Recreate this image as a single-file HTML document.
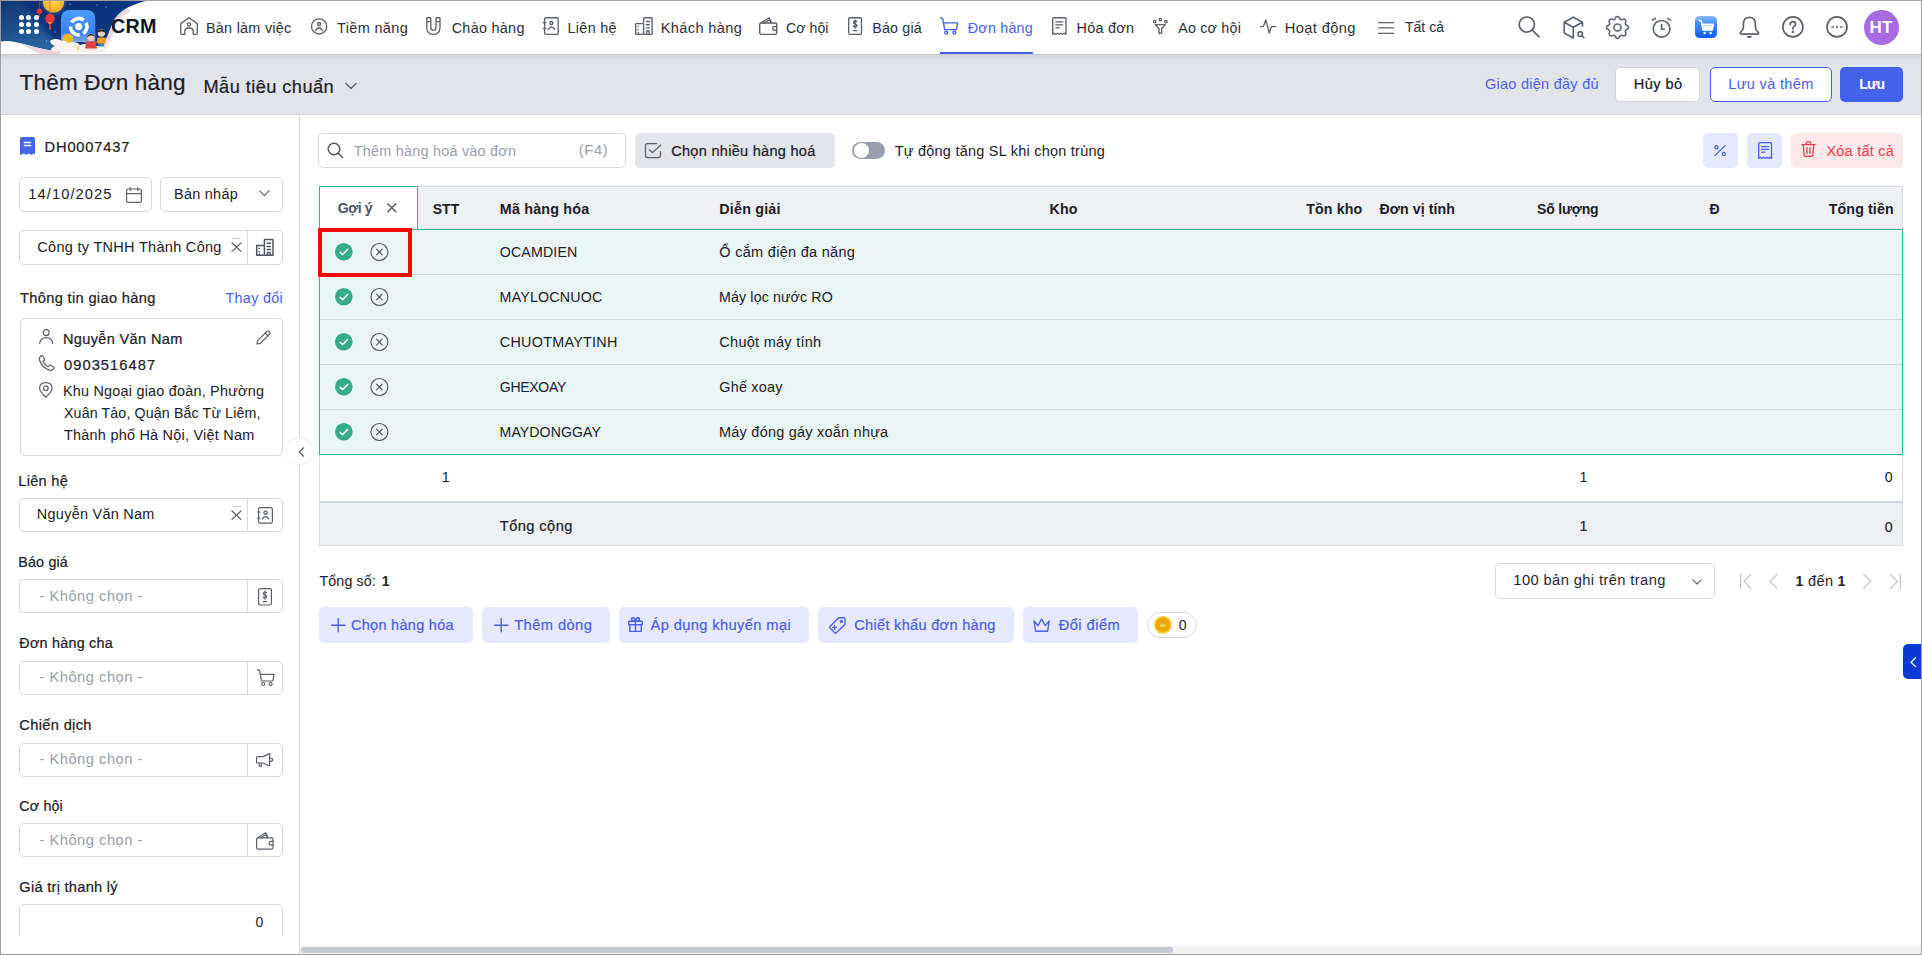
<!DOCTYPE html>
<html><head><meta charset="utf-8"><style>
html,body{margin:0;padding:0;}
body{width:1922px;height:955px;position:relative;overflow:hidden;background:#fff;font-family:"Liberation Sans", sans-serif;}
.t{position:absolute;white-space:nowrap;line-height:1;}
svg{overflow:visible}
</style></head><body>
<div style="position:absolute;left:0px;top:0px;width:1922px;height:54px;background:#fff;"></div><div style="position:absolute;left:0px;top:54px;width:1922px;height:61px;background:#e3e4e9;"></div><div style="position:absolute;left:0px;top:54px;width:1922px;height:7px;background:linear-gradient(#c5c6cc,#d5d6db 25%,#e3e4e9);"></div><div style="position:absolute;left:0px;top:114px;width:1922px;height:1px;background:#cfd3da;"></div><div style="position:absolute;left:0px;top:115px;width:299px;height:840px;background:#fff;"></div><div style="position:absolute;left:300px;top:115px;width:1622px;height:840px;background:#fff;"></div><div style="position:absolute;left:300px;top:946px;width:1621px;height:8px;background:#f1f1f1;"></div><div style="position:absolute;left:301px;top:947px;width:872px;height:6px;background:#c4c8d2;border-radius:3px;"></div><svg style="position:absolute;left:0px;top:0px;overflow:hidden" width="165" height="54" viewBox="0 0 165 54" fill="none">
<defs>
 <linearGradient id="nv" x1="0" y1="0" x2="1" y2="0.3"><stop offset="0" stop-color="#0c2f6e"/><stop offset="0.6" stop-color="#073078"/><stop offset="1" stop-color="#0d3f8c"/></linearGradient>
 <linearGradient id="nv2" x1="0" y1="0" x2="0.4" y2="1"><stop offset="0" stop-color="#123a72" stop-opacity="0.7"/><stop offset="1" stop-color="#2a66a2"/></linearGradient>
 <linearGradient id="lg" x1="0" y1="0" x2="0" y2="1"><stop offset="0" stop-color="#4b9cff"/><stop offset="0.7" stop-color="#3a80f5"/><stop offset="1" stop-color="#7fa9f0"/></linearGradient>
 <radialGradient id="mn" cx="0.5" cy="0.4" r="0.6"><stop offset="0" stop-color="#ffd95a"/><stop offset="1" stop-color="#f6ab1a"/></radialGradient>
 <filter id="bl" x="-0.5" y="-0.5" width="2" height="2"><feGaussianBlur stdDeviation="3"/></filter>
 <radialGradient id="glow"><stop offset="0.6" stop-color="#ffffff" stop-opacity="0.25"/><stop offset="1" stop-color="#ffffff" stop-opacity="0"/></radialGradient>
</defs>
<path d="M128 8 C120 13 115 17 113 22 C109 31 107 38 104 44 C101 49 96 52 90 53" stroke="#efd8e0" stroke-width="8" fill="none"/>
<path d="M0 0 H152 C132 3 118 11 113 22 C109 31 107 38 104 44 C100 50 92 53 80 53 H0 Z" fill="url(#nv)"/>
<path d="M-4 0 H20 C30 8 40 24 50 36 C56 44 58 50 60 53 H-4 Z" fill="url(#nv2)" filter="url(#bl)"/>
<circle cx="53.6" cy="2" r="14" fill="url(#glow)"/>
<circle cx="53.6" cy="2" r="10.6" fill="url(#mn)"/>
<path d="M0 41.5 C8 40 16 42 24 44 C34 47 44 50 56 51 L58 54 H0 Z" fill="#ffffff"/>
<path d="M20 43.5 C32 46 44 50 58 51 L62 54 H40 C32 50 26 46 20 43.5Z" fill="#ead5dd"/>
<line x1="39.4" y1="0" x2="39.4" y2="9" stroke="#d03a2a" stroke-width="0.7"/>
<ellipse cx="39.4" cy="11.2" rx="2.7" ry="2.6" fill="#df3a33"/>
<rect x="38.9" y="13.5" width="1.1" height="3.5" fill="#d8402c"/>
<line x1="49.9" y1="0" x2="49.9" y2="13" stroke="#e06a2a" stroke-width="0.8"/>
<ellipse cx="49.9" cy="18.6" rx="4.9" ry="5.2" fill="#e2383a"/>
<rect x="48.9" y="23" width="2.1" height="6.8" fill="#d33a33"/>
<rect x="48.3" y="22.3" width="3.3" height="1.4" fill="#f2a73a"/>
<circle cx="70" cy="4" r="0.6" fill="#cfe0ff"/><circle cx="97" cy="5" r="0.6" fill="#cfe0ff"/><circle cx="106" cy="7" r="0.6" fill="#cfe0ff"/><circle cx="127" cy="11" r="0.6" fill="#cfe0ff"/><circle cx="55" cy="32" r="0.6" fill="#cfe0ff"/><circle cx="46.6" cy="41" r="0.6" fill="#cfe0ff"/>
<path d="M61 19 Q61 9.9 70 9.9 H86.3 Q95.3 9.9 95.3 19 V42 H61 Z" fill="url(#lg)"/>
<circle cx="78.7" cy="26.6" r="8.2" fill="none" stroke="#fff" stroke-width="3.6" stroke-dasharray="14 3.5 12 3.5 14 4.5" transform="rotate(-150 78.7 26.6)"/>
<circle cx="78.7" cy="26.6" r="3.6" fill="#fff"/>
<ellipse cx="67.8" cy="38.8" rx="5.4" ry="5" fill="#f1b91e"/>
<path d="M50 41 C54 38 60 39 62 41 C64 40 67 41 68 43 C72 41 78 42 80 45 C84 43 90 44 92 46 L104 46 C106 48 104 52 98 52 C86 53 62 53 52 51 C50 49 52 47 55 46 C52 45 50 43 50 41Z" fill="#f6f1ec"/>
<path d="M104 40 C107 38 110 40 110 43 C110 46 106 48 102 47Z" fill="#f3ece6"/>
<rect x="60" y="52" width="50" height="3" fill="#fdfbf9"/>

<circle cx="90.8" cy="37.4" r="3.6" fill="#f4cdb0"/>
<path d="M87 37.5 C86.6 33 95 32.6 94.6 37 C93 35 89 35 87 37.5Z" fill="#2b1a14"/>
<path d="M86.5 41.5 L95.5 41.2 L97 48.5 L85 48.5Z" fill="#e04646"/>
<path d="M84 42 L87 43 M95 43 L98 41" stroke="#e04646" stroke-width="1.3"/>
<circle cx="101.3" cy="33" r="3.7" fill="#f4cdb0"/>
<path d="M97.4 33 C97 28.4 105.6 28.4 105.3 33 C104 31 99 31 97.4 33Z" fill="#2b1a14"/>
<rect x="97.2" y="37.4" width="8.6" height="6.4" rx="1.6" fill="#f59f1c"/>
<rect x="98.2" y="43.6" width="6" height="2.8" fill="#2f86b4"/>
<path d="M105.5 38.5 L109.6 36.8" stroke="#f4cdb0" stroke-width="1"/>
<rect x="77" y="46.6" width="2.2" height="2.8" fill="#f2d36a"/>
</svg><div style="position:absolute;left:18.9px;top:14.7px;width:5px;height:5px;border-radius:50%;background:#fff;"></div><div style="position:absolute;left:26.4px;top:14.7px;width:5px;height:5px;border-radius:50%;background:#fff;"></div><div style="position:absolute;left:33.9px;top:14.7px;width:5px;height:5px;border-radius:50%;background:#fff;"></div><div style="position:absolute;left:18.9px;top:21.9px;width:5px;height:5px;border-radius:50%;background:#fff;"></div><div style="position:absolute;left:26.4px;top:21.9px;width:5px;height:5px;border-radius:50%;background:#fff;"></div><div style="position:absolute;left:33.9px;top:21.9px;width:5px;height:5px;border-radius:50%;background:#fff;"></div><div style="position:absolute;left:18.9px;top:29.2px;width:5px;height:5px;border-radius:50%;background:#fff;"></div><div style="position:absolute;left:26.4px;top:29.2px;width:5px;height:5px;border-radius:50%;background:#fff;"></div><div style="position:absolute;left:33.9px;top:29.2px;width:5px;height:5px;border-radius:50%;background:#fff;"></div><svg style="position:absolute;left:180px;top:17px;" width="18" height="18" viewBox="0 0 18 18" fill="none"><path d="M9 0.8 L17.3 6.6 V16.3 Q17.3 17.3 16.3 17.3 H13.2 V14.2 Q13.2 11 9 11 Q4.8 11 4.8 14.2 V17.3 H1.7 Q0.7 17.3 0.7 16.3 V6.6 Z" stroke="#5c616c" stroke-width="1.35" stroke-linecap="round" stroke-linejoin="round"/><circle cx="9" cy="7.4" r="1.6" stroke="#5c616c" stroke-width="1.35" stroke-linecap="round" stroke-linejoin="round"/></svg><svg style="position:absolute;left:311px;top:18px;" width="17" height="17" viewBox="0 0 17 17" fill="none"><circle cx="8.1" cy="8.4" r="7.6" stroke="#5c616c" stroke-width="1.35" stroke-linecap="round" stroke-linejoin="round"/><circle cx="8.1" cy="6" r="1.5" stroke="#5c616c" stroke-width="1.35" stroke-linecap="round" stroke-linejoin="round"/><path d="M4.6 12.6 Q8.1 6.8 11.6 12.6" stroke="#5c616c" stroke-width="1.35" stroke-linecap="round" stroke-linejoin="round"/></svg><svg style="position:absolute;left:426px;top:17px;" width="15" height="18" viewBox="0 0 15 18" fill="none"><path d="M0.8 1.5 Q0.8 0.7 1.6 0.7 H4 Q4.8 0.7 4.8 1.5 V10.5 Q4.8 13.3 7.4 13.3 Q10 13.3 10 10.5 V1.5 Q10 0.7 10.8 0.7 H13.2 Q14 0.7 14 1.5 V10.5 Q14 17.3 7.4 17.3 Q0.8 17.3 0.8 10.5 Z M0.8 4.6 H4.8 M10 4.6 H14" stroke="#5c616c" stroke-width="1.35" stroke-linecap="round" stroke-linejoin="round"/></svg><svg style="position:absolute;left:543px;top:17px;" width="16" height="18" viewBox="0 0 16 18" fill="none"><rect x="1.6" y="0.7" width="13.6" height="16.6" rx="1.2" stroke="#5c616c" stroke-width="1.35" stroke-linecap="round" stroke-linejoin="round"/><path d="M0.5 5.5 H2.6 M0.5 11.5 H2.6" stroke="#5c616c" stroke-width="1.35" stroke-linecap="round" stroke-linejoin="round"/><circle cx="8.4" cy="6" r="1.5" stroke="#5c616c" stroke-width="1.35" stroke-linecap="round" stroke-linejoin="round"/><path d="M5 12.3 Q8.4 7.6 11.8 12.3" stroke="#5c616c" stroke-width="1.35" stroke-linecap="round" stroke-linejoin="round"/></svg><svg style="position:absolute;left:635px;top:17px;" width="18" height="18" viewBox="0 0 18 18" fill="none"><path d="M0.7 17.3 V6.6 H8.6 M8.6 17.3 V1.4 Q8.6 0.7 9.3 0.7 H16.4 Q17.1 0.7 17.1 1.4 V17.3 Z M0.7 17.3 H17.1 M3.2 9.5 V9.8 M3.2 12.6 V12.9 M11.4 4.5 H14.4 M11.4 7.7 H14.4 M11.4 10.9 H14.4 M11.6 17.3 V14 H14.2 V17.3 M3.4 17.3 V15.4" stroke="#5c616c" stroke-width="1.35" stroke-linecap="round" stroke-linejoin="round"/></svg><svg style="position:absolute;left:759px;top:17px;" width="19" height="18" viewBox="0 0 19 18" fill="none"><path d="M1.5 6.3 L10 0.8 L12.3 5 M5 6.3 L10.5 2.8 L12 5.6" stroke="#5c616c" stroke-width="1.35" stroke-linecap="round" stroke-linejoin="round"/><rect x="0.7" y="6" width="17" height="11.3" rx="1.5" stroke="#5c616c" stroke-width="1.35" stroke-linecap="round" stroke-linejoin="round"/><path d="M17.7 9.6 H15.4 Q13.6 9.6 13.6 11.4 Q13.6 13.2 15.4 13.2 H17.7" stroke="#5c616c" stroke-width="1.35" stroke-linecap="round" stroke-linejoin="round"/></svg><svg style="position:absolute;left:848px;top:17px;" width="14" height="18" viewBox="0 0 14 18" fill="none"><rect x="0.7" y="0.7" width="12.8" height="16.6" rx="1.3" stroke="#5c616c" stroke-width="1.35" stroke-linecap="round" stroke-linejoin="round"/><path d="M8.8 4.9 Q8.5 4 7.1 4 Q5.4 4 5.4 5.4 Q5.4 6.6 7.1 7 Q8.9 7.4 8.9 8.7 Q8.9 10 7.1 10 Q5.6 10 5.3 9 M7.1 2.8 V11.2 M5.4 13.6 H8.8" stroke="#5c616c" stroke-width="1.35" stroke-linecap="round" stroke-linejoin="round"/></svg><svg style="position:absolute;left:940px;top:17px;" width="19" height="18" viewBox="0 0 19 18" fill="none"><path d="M0.7 0.7 L2.8 1.8 L4.7 12.6 H16.4 L17.6 5.8 H3.6" stroke="#4262ee" stroke-width="1.35" stroke-linecap="round" stroke-linejoin="round"/><circle cx="6.2" cy="15.6" r="1.5" stroke="#4262ee" stroke-width="1.35" stroke-linecap="round" stroke-linejoin="round"/><circle cx="14.4" cy="15.6" r="1.5" stroke="#4262ee" stroke-width="1.35" stroke-linecap="round" stroke-linejoin="round"/></svg><div style="position:absolute;left:940px;top:52px;width:93px;height:2px;background:#4262ee;"></div><svg style="position:absolute;left:1052px;top:17px;" width="15" height="18" viewBox="0 0 15 18" fill="none"><path d="M0.7 17.3 V1.6 Q0.7 0.7 1.6 0.7 H13.1 Q14 0.7 14 1.6 V17.3 L12.3 16.2 L10.6 17.3 L8.9 16.2 L7.2 17.3 L5.5 16.2 L3.8 17.3 L2.2 16.2 Z M3.8 4.8 H10.8 M3.8 7.8 H10.8 M3.8 10.8 H7.6" stroke="#5c616c" stroke-width="1.35" stroke-linecap="round" stroke-linejoin="round"/></svg><svg style="position:absolute;left:1153px;top:18px;" width="15" height="16" viewBox="0 0 15 16" fill="none"><circle cx="7.3" cy="1.5" r="1.2" stroke="#5c616c" stroke-width="1.35" stroke-linecap="round" stroke-linejoin="round"/><circle cx="1.7" cy="3.6" r="1.2" stroke="#5c616c" stroke-width="1.35" stroke-linecap="round" stroke-linejoin="round"/><circle cx="12.9" cy="3.6" r="1.2" stroke="#5c616c" stroke-width="1.35" stroke-linecap="round" stroke-linejoin="round"/><path d="M2.3 6.6 H12.3 L8.6 10.8 V15 L6 15.6 V10.8 Z" stroke="#5c616c" stroke-width="1.35" stroke-linecap="round" stroke-linejoin="round"/></svg><svg style="position:absolute;left:1260px;top:19px;" width="17" height="15" viewBox="0 0 17 15" fill="none"><path d="M0.6 7.6 H3.4 L5.8 0.9 L9.3 14.2 L11.4 7.6 H15.8" stroke="#5c616c" stroke-width="1.35" stroke-linecap="round" stroke-linejoin="round"/></svg><svg style="position:absolute;left:1378px;top:21px;" width="17" height="14" viewBox="0 0 17 14" fill="none"><path d="M0.6 1.6 H15.8 M0.6 6.8 H15.8 M0.6 12.4 H15.8" stroke="#5c616c" stroke-width="1.2" stroke-linecap="round"/></svg><svg style="position:absolute;left:1518px;top:16px;" width="23" height="23" viewBox="0 0 23 23" fill="none"><circle cx="8.8" cy="8.6" r="7.6" stroke="#5d616b" stroke-width="1.7" stroke-linecap="round" stroke-linejoin="round"/><path d="M14.6 14.4 L21 20.8" stroke="#5d616b" stroke-width="1.7" stroke-linecap="round" stroke-linejoin="round"/></svg><svg style="position:absolute;left:1563px;top:16px;" width="23" height="23" viewBox="0 0 23 23" fill="none"><path d="M19.5 10 V6.2 L10.3 1.2 L1.2 6.2 V17 L10.3 22 M1.2 6.2 L10.3 11.2 L19.5 6.2 M10.3 11.2 V22" stroke="#58606f" stroke-width="1.6" stroke-linecap="round" stroke-linejoin="round"/><circle cx="17.2" cy="18" r="2.3" stroke="#58606f" stroke-width="1.6" stroke-linecap="round" stroke-linejoin="round"/><path d="M18.9 19.7 L20.9 21.7" stroke="#58606f" stroke-width="1.6" stroke-linecap="round" stroke-linejoin="round"/></svg><svg style="position:absolute;left:1606px;top:16px" width="23" height="23" viewBox="2.6 2.6 18.8 18.8" fill="none"><path d="M10.325 4.317c.426-1.756 2.924-1.756 3.35 0a1.724 1.724 0 0 0 2.573 1.066c1.543-.94 3.31.826 2.37 2.370a1.724 1.724 0 0 0 1.065 2.572c1.756.426 1.756 2.924 0 3.350a1.724 1.724 0 0 0-1.066 2.573c.94 1.543-.826 3.310-2.370 2.370a1.724 1.724 0 0 0-2.572 1.065c-.426 1.756-2.924 1.756-3.350 0a1.724 1.724 0 0 0-2.573-1.066c-1.543.94-3.310-.826-2.370-2.370a1.724 1.724 0 0 0-1.065-2.572c-1.756-.426-1.756-2.924 0-3.350a1.724 1.724 0 0 0 1.066-2.573c-.94-1.543.826-3.310 2.370-2.370c1 .608 2.296.07 2.572-1.065z" stroke="#58606f" stroke-width="1.3" stroke-linejoin="round"/><circle cx="12" cy="12" r="2.9" stroke="#58606f" stroke-width="1.3"/></svg><svg style="position:absolute;left:1651px;top:16px;" width="22" height="23" viewBox="0 0 22 23" fill="none"><circle cx="10.6" cy="12.8" r="8.3" stroke="#58606f" stroke-width="1.6" stroke-linecap="round" stroke-linejoin="round"/><path d="M10.6 8.6 V13.2 H13.4 M1.6 4.2 L4.4 2.4 M19.6 4.2 L16.8 2.4" stroke="#58606f" stroke-width="1.6" stroke-linecap="round" stroke-linejoin="round"/></svg><svg style="position:absolute;left:1695px;top:16px;" width="22" height="22" viewBox="0 0 22 22" fill="none"><defs><linearGradient id="cg" x1="0" y1="0" x2="0" y2="1"><stop offset="0" stop-color="#8cbcff"/><stop offset="0.35" stop-color="#3f8cff"/><stop offset="1" stop-color="#0a5cff"/></linearGradient></defs>
<rect x="0" y="0" width="22" height="22" rx="4.5" fill="url(#cg)"/>
<path d="M4.5 4.3 L6.4 5.3 L8 13.8 H17.2 L18.2 8.3 H7" stroke="#fff" stroke-width="1.7" stroke-linecap="round" stroke-linejoin="round" fill="none"/>
<path d="M7.6 9.6 H17.8 L17.2 13.6 H8.3Z" fill="#fff"/><circle cx="9.6" cy="17" r="1.2" fill="#fff"/><circle cx="15.6" cy="17" r="1.2" fill="#fff"/></svg><svg style="position:absolute;left:1739px;top:16px;" width="21" height="23" viewBox="0 0 21 23" fill="none"><path d="M10.4 1.4 Q4.4 1.4 4.4 8.2 V11.6 Q4.4 14 1.4 16.4 Q0.6 18 2.8 18.2 H18 Q20 18 19.4 16.4 Q16.4 14 16.4 11.6 V8.2 Q16.4 1.4 10.4 1.4 Z M8.8 20.8 H12" stroke="#5d616b" stroke-width="1.7" stroke-linecap="round" stroke-linejoin="round"/></svg><svg style="position:absolute;left:1782px;top:16px;" width="22" height="22" viewBox="0 0 22 22" fill="none"><circle cx="10.9" cy="10.9" r="10" stroke="#5d616b" stroke-width="1.7" stroke-linecap="round" stroke-linejoin="round"/><path d="M8.2 8.4 Q8.2 5.6 10.9 5.6 Q13.6 5.6 13.6 8.2 Q13.6 9.8 11.8 10.6 Q10.9 11.2 10.9 12.8" stroke="#5d616b" stroke-width="1.7" stroke-linecap="round" stroke-linejoin="round"/><circle cx="10.9" cy="15.9" r="0.5" stroke="#5d616b" stroke-width="1.7" stroke-linecap="round" stroke-linejoin="round"/></svg><svg style="position:absolute;left:1826px;top:16px;" width="22" height="22" viewBox="0 0 22 22" fill="none"><circle cx="11" cy="10.9" r="10" stroke="#5d616b" stroke-width="1.7" stroke-linecap="round" stroke-linejoin="round"/><circle cx="6.6" cy="11" r="0.35" stroke="#5d616b" stroke-width="1.7" stroke-linecap="round" stroke-linejoin="round"/><circle cx="11" cy="11" r="0.35" stroke="#5d616b" stroke-width="1.7" stroke-linecap="round" stroke-linejoin="round"/><circle cx="15.4" cy="11" r="0.35" stroke="#5d616b" stroke-width="1.7" stroke-linecap="round" stroke-linejoin="round"/></svg><div style="position:absolute;left:1864px;top:10px;width:35px;height:35px;border-radius:50%;background:#a86be2;"></div><svg style="position:absolute;left:345px;top:82px;" width="12" height="8" viewBox="0 0 12 8" fill="none"><path d="M1 1.5 L6 6.5 L11 1.5" stroke="#5c616c" stroke-width="1.3" stroke-linecap="round" stroke-linejoin="round"/></svg><div style="position:absolute;left:1614.9px;top:67.3px;width:85.6px;height:34.3px;box-sizing:border-box;background:#fff;border:1px solid #d3d6dc;border-radius:5px;"></div><div style="position:absolute;left:1710px;top:67px;width:122px;height:35px;box-sizing:border-box;background:#fff;border:1px solid #4262ee;border-radius:5px;"></div><div style="position:absolute;left:1840px;top:67px;width:63px;height:35px;background:#4262ee;border-radius:5px;"></div><svg style="position:absolute;left:20px;top:137px;" width="15" height="18" viewBox="0 0 15 18" fill="none"><path d="M0 1.8 Q0 0 1.8 0 H13.2 Q15 0 15 1.8 V17.2 Q13.8 16 12.6 17.2 Q11.4 18.2 10 17 Q8.8 16 7.5 17.2 Q6.2 18.2 5 17 Q3.8 16 2.5 17.2 Q1.2 18.2 0 17.2 Z" fill="#4664ee"/><path d="M4.4 5.4 H10.6 M4.4 8.6 H10.6" stroke="#fff" stroke-width="1.5" stroke-linecap="round"/></svg><div style="position:absolute;left:19.2px;top:177.2px;width:132.5px;height:34.5px;box-sizing:border-box;background:#fff;border:1px solid #d6d9e0;border-radius:5px;"></div><svg style="position:absolute;left:126px;top:187px;" width="16" height="16" viewBox="0 0 16 16" fill="none"><rect x="0.6" y="2" width="14.8" height="13.4" rx="1.6" stroke="#5a5f6b" stroke-width="1.2" stroke-linecap="round" stroke-linejoin="round"/><path d="M0.6 6.6 H15.4 M4.2 0.6 V3.4 M11.8 0.6 V3.4" stroke="#5a5f6b" stroke-width="1.2" stroke-linecap="round" stroke-linejoin="round"/></svg><div style="position:absolute;left:160.2px;top:177.1px;width:122.5px;height:34.7px;box-sizing:border-box;background:#fff;border:1px solid #d6d9e0;border-radius:5px;"></div><svg style="position:absolute;left:259px;top:190px;" width="11" height="7" viewBox="0 0 11 7" fill="none"><path d="M0.8 0.8 L5.3 5.6 L9.9 0.8" stroke="#5a5f6b" stroke-width="1.2" stroke-linecap="round" stroke-linejoin="round"/></svg><div style="position:absolute;left:19.2px;top:230.3px;width:263.5px;height:34.3px;box-sizing:border-box;background:#fff;border:1px solid #d6d9e0;border-radius:5px;"></div><div style="position:absolute;left:247.2px;top:231px;width:1px;height:33px;background:#d6d9e0;"></div><svg style="position:absolute;left:231px;top:238px;" width="11" height="14" viewBox="0 0 11 14" fill="none"><path d="M1 0.5 H10 " stroke="#c9ccd3" stroke-width="1"/><path d="M1 5 L10 13.4 M10 5 L1 13.4" stroke="#5a5f6b" stroke-width="1.2" stroke-linecap="round"/></svg><svg style="position:absolute;left:256px;top:239px;" width="18" height="17" viewBox="0 0 18 17" fill="none"><path d="M0.7 16.3 V6.4 H8.4 M8.4 16.3 V1.2 Q8.4 0.6 9 0.6 H16.4 Q17 0.6 17 1.2 V16.3 Z M0.7 16.3 H17 M3.1 9.2 V9.6 M3.1 12.4 V12.8 M11.2 4.2 H14.4 M11.2 7.4 H14.4 M11.2 10.6 H14.4 M11.4 16.3 V13.6 H14.2 V16.3 M3.4 16.3 V15" stroke="#4f5563" stroke-width="1.5" stroke-linecap="round" stroke-linejoin="round"/></svg><div style="position:absolute;left:19.5px;top:318.2px;width:263.1px;height:137.8px;box-sizing:border-box;background:#fff;border:1px solid #d6d9e0;border-radius:5px;"></div><svg style="position:absolute;left:38.9px;top:329px;" width="15" height="15" viewBox="0 0 15 15" fill="none"><circle cx="7.2" cy="3.6" r="3" stroke="#5a5f6b" stroke-width="1.2" stroke-linecap="round" stroke-linejoin="round"/><path d="M0.6 14.4 Q1.6 8.6 7.2 8.6 Q12.8 8.6 13.8 14.4" stroke="#5a5f6b" stroke-width="1.2" stroke-linecap="round" stroke-linejoin="round"/></svg><svg style="position:absolute;left:255.5px;top:329.5px;" width="16" height="15" viewBox="0 0 16 15" fill="none"><path d="M1 14 L1.6 10.6 L10.6 1.6 Q11.8 0.4 13.2 1.8 Q14.6 3.2 13.4 4.4 L4.4 13.4 Z M9.2 3 L12 5.8" stroke="#5a5f6b" stroke-width="1.2" stroke-linecap="round" stroke-linejoin="round"/></svg><svg style="position:absolute;left:37.8px;top:355px;" width="17" height="16" viewBox="0 0 17 16" fill="none"><path d="M4.6 0.8 L6.6 4.4 Q7 5.2 6.2 5.8 L5 6.8 Q6.6 10.2 10 11.8 L11 10.6 Q11.6 9.8 12.4 10.2 L15.8 12 Q16.4 12.6 15.8 13.6 Q14 16 11.4 15.2 Q4 12.6 1.4 5 Q0.8 2.6 3 1 Q4 0.2 4.6 0.8 Z" stroke="#5a5f6b" stroke-width="1.2" stroke-linecap="round" stroke-linejoin="round"/></svg><svg style="position:absolute;left:39.3px;top:382px;" width="14" height="16" viewBox="0 0 14 16" fill="none"><path d="M6.8 15.2 Q0.6 9.4 0.6 6.2 Q0.6 0.6 6.8 0.6 Q13 0.6 13 6.2 Q13 9.4 6.8 15.2 Z" stroke="#5a5f6b" stroke-width="1.2" stroke-linecap="round" stroke-linejoin="round"/><circle cx="6.8" cy="6.2" r="2.3" stroke="#5a5f6b" stroke-width="1.2" stroke-linecap="round" stroke-linejoin="round"/></svg><div style="position:absolute;left:19.3px;top:498.3px;width:263.3px;height:34.1px;box-sizing:border-box;background:#fff;border:1px solid #d6d9e0;border-radius:5px;"></div><div style="position:absolute;left:247px;top:499.3px;width:1px;height:32.1px;background:#d6d9e0;"></div><svg style="position:absolute;left:231px;top:506.0px;" width="11" height="14" viewBox="0 0 11 14" fill="none"><path d="M1 0.5 H10 " stroke="#c9ccd3" stroke-width="1"/><path d="M1 5 L10 13.4 M10 5 L1 13.4" stroke="#5a5f6b" stroke-width="1.2" stroke-linecap="round"/></svg><svg style="position:absolute;left:257px;top:507.2px;" width="16" height="17" viewBox="0 0 16 17" fill="none"><rect x="1.6" y="0.6" width="13.8" height="15.6" rx="1.4" stroke="#5a5f6b" stroke-width="1.2" stroke-linecap="round" stroke-linejoin="round"/><path d="M0.4 5 H2.8 M0.4 11 H2.8" stroke="#5a5f6b" stroke-width="1.2" stroke-linecap="round" stroke-linejoin="round"/><circle cx="8.5" cy="5.8" r="1.6" stroke="#5a5f6b" stroke-width="1.2" stroke-linecap="round" stroke-linejoin="round"/><path d="M5.2 11.8 Q8.5 7.4 11.8 11.8" stroke="#5a5f6b" stroke-width="1.2" stroke-linecap="round" stroke-linejoin="round"/></svg><div style="position:absolute;left:19.3px;top:579.4px;width:263.3px;height:34.1px;box-sizing:border-box;background:#fff;border:1px solid #d6d9e0;border-radius:5px;"></div><div style="position:absolute;left:247px;top:580.4px;width:1px;height:32.1px;background:#d6d9e0;"></div><svg style="position:absolute;left:258px;top:588px;" width="14" height="18" viewBox="0 0 14 18" fill="none"><rect x="0.6" y="0.6" width="12.8" height="16.4" rx="1.4" stroke="#5a5f6b" stroke-width="1.2" stroke-linecap="round" stroke-linejoin="round"/><path d="M8.6 5 Q8.2 4 7 4 Q5.4 4 5.4 5.4 Q5.4 6.6 7 7 Q8.6 7.4 8.6 8.6 Q8.6 10 7 10 Q5.6 10 5.2 9 M7 2.8 V11.2 M5.4 13.6 H8.6" stroke="#5a5f6b" stroke-width="1.2" stroke-linecap="round" stroke-linejoin="round"/></svg><div style="position:absolute;left:19.3px;top:660.5px;width:263.3px;height:34.1px;box-sizing:border-box;background:#fff;border:1px solid #d6d9e0;border-radius:5px;"></div><div style="position:absolute;left:247px;top:661.5px;width:1px;height:32.1px;background:#d6d9e0;"></div><svg style="position:absolute;left:256.7px;top:669.2px;" width="18" height="18" viewBox="0 0 18 18" fill="none"><path d="M0.6 0.6 L2.6 1.6 L4.4 12 H15.8 L17 5.4 H3.4" stroke="#5a5f6b" stroke-width="1.2" stroke-linecap="round" stroke-linejoin="round"/><circle cx="6.2" cy="15" r="1.5" stroke="#5a5f6b" stroke-width="1.2" stroke-linecap="round" stroke-linejoin="round"/><circle cx="13.6" cy="15" r="1.5" stroke="#5a5f6b" stroke-width="1.2" stroke-linecap="round" stroke-linejoin="round"/></svg><div style="position:absolute;left:19.3px;top:742.5px;width:263.3px;height:34.1px;box-sizing:border-box;background:#fff;border:1px solid #d6d9e0;border-radius:5px;"></div><div style="position:absolute;left:247px;top:743.5px;width:1px;height:32.1px;background:#d6d9e0;"></div><svg style="position:absolute;left:256px;top:753px;" width="18" height="14" viewBox="0 0 18 14" fill="none"><path d="M1.6 3.6 H7 L13.6 0.6 V13 L7 10 H1.6 Q0.6 10 0.6 9 V4.6 Q0.6 3.6 1.6 3.6 Z M3.2 10 V13.2 H5.4 V10 M13.6 5 Q16.6 5 16.6 6.8 Q16.6 8.6 13.6 8.6" stroke="#5a5f6b" stroke-width="1.2" stroke-linecap="round" stroke-linejoin="round"/></svg><div style="position:absolute;left:19.3px;top:823.4px;width:263.3px;height:34.1px;box-sizing:border-box;background:#fff;border:1px solid #d6d9e0;border-radius:5px;"></div><div style="position:absolute;left:247px;top:824.4px;width:1px;height:32.1px;background:#d6d9e0;"></div><svg style="position:absolute;left:256px;top:832px;" width="18" height="18" viewBox="0 0 18 18" fill="none"><path d="M1.4 6 L9.6 0.8 L11.8 4.8 M4.8 6 L10 2.6 L11.4 5.4" stroke="#5a5f6b" stroke-width="1.2" stroke-linecap="round" stroke-linejoin="round"/><rect x="0.6" y="5.8" width="16.4" height="11.4" rx="1.5" stroke="#5a5f6b" stroke-width="1.2" stroke-linecap="round" stroke-linejoin="round"/><path d="M17 9.4 H14.8 Q13 9.4 13 11.3 Q13 13.2 14.8 13.2 H17" stroke="#5a5f6b" stroke-width="1.2" stroke-linecap="round" stroke-linejoin="round"/></svg><div style="position:absolute;left:19.3px;top:904.3px;width:263.3px;height:40px;box-sizing:border-box;background:#fff;border:1px solid #d6d9e0;border-radius:5px;"></div><div style="position:absolute;left:2px;top:936px;width:296px;height:18px;background:#fff;"></div><div style="position:absolute;left:299px;top:115px;width:1px;height:840px;background:#d5d8de;"></div><div style="position:absolute;left:287px;top:438px;width:26px;height:26px;border-radius:50%;background:#fff;box-shadow:0 0 3px rgba(0,0,0,0.12);"></div><svg style="position:absolute;left:297.5px;top:446.5px;" width="7" height="10" viewBox="0 0 7 10" fill="none"><path d="M5.6 0.8 L1.2 5 L5.6 9.2" stroke="#5a5f6b" stroke-width="1.2" stroke-linecap="round" stroke-linejoin="round"/></svg><div style="position:absolute;left:318.3px;top:133.2px;width:307.3px;height:34.4px;box-sizing:border-box;background:#fff;border:1px solid #d6d9e0;border-radius:5px;"></div><svg style="position:absolute;left:327px;top:142px;" width="17" height="17" viewBox="0 0 17 17" fill="none"><circle cx="7" cy="7" r="5.8" stroke="#4f5563" stroke-width="1.4"/><path d="M11.2 11.2 L15.6 15.6" stroke="#4f5563" stroke-width="1.4" stroke-linecap="round"/></svg><div style="position:absolute;left:634.9px;top:132.9px;width:199.9px;height:34.9px;background:#e3e5ea;border-radius:5px;"></div><svg style="position:absolute;left:644px;top:142px;" width="18" height="17" viewBox="0 0 18 17" fill="none"><path d="M12.6 1.5 H3.6 Q1.5 1.5 1.5 3.6 V13.5 Q1.5 15.6 3.6 15.6 H14.3 Q16.4 15.6 16.4 13.5 V9.6" stroke="#5a5f6b" stroke-width="1.25" stroke-linecap="round"/><path d="M5.3 8 L8.4 10.6 L16.6 3.2" stroke="#5a5f6b" stroke-width="1.25" stroke-linecap="round" stroke-linejoin="round"/></svg><div style="position:absolute;left:852px;top:141.8px;width:33px;height:17px;background:#989eae;border-radius:9px;"></div><div style="position:absolute;left:854px;top:142.6px;width:15.4px;height:15.4px;border-radius:50%;background:#fff;"></div><div style="position:absolute;left:1703px;top:133px;width:34.8px;height:34.8px;background:#e6e9fc;border-radius:5px;"></div><svg style="position:absolute;left:1714px;top:145px;" width="13" height="12" viewBox="0 0 13 12" fill="none"><circle cx="2.4" cy="2.2" r="1.6" stroke="#4262ee" stroke-width="1.2"/><circle cx="9.8" cy="9" r="1.6" stroke="#4262ee" stroke-width="1.2"/><path d="M0.8 10.6 L11.2 0.6" stroke="#4262ee" stroke-width="1.3" stroke-linecap="round"/></svg><div style="position:absolute;left:1747px;top:133px;width:34.9px;height:34.8px;background:#e6e9fc;border-radius:5px;"></div><svg style="position:absolute;left:1758px;top:142px;" width="15" height="17" viewBox="0 0 15 17" fill="none"><path d="M0.7 16.4 V1.8 Q0.7 0.7 1.8 0.7 H12.4 Q13.5 0.7 13.5 1.8 V16.4 L11.9 15.2 L10.3 16.4 L8.7 15.2 L7.1 16.4 L5.5 15.2 L3.9 16.4 L2.3 15.2 Z M3.6 4.6 H10.6 M3.6 7.4 H10.6 M3.6 10.2 H7" stroke="#4262ee" stroke-width="1.3" stroke-linecap="round" stroke-linejoin="round"/></svg><div style="position:absolute;left:1791px;top:133px;width:111.8px;height:34.8px;background:#fde8ea;border-radius:5px;"></div><svg style="position:absolute;left:1801px;top:141px;" width="15" height="16" viewBox="0 0 15 16" fill="none"><path d="M0.8 3.6 H14.2 M5.2 3.4 V1.8 Q5.2 0.8 6.2 0.8 H8.8 Q9.8 0.8 9.8 1.8 V3.4 M2.2 3.8 L3.2 14.4 Q3.3 15.4 4.3 15.4 H10.7 Q11.7 15.4 11.8 14.4 L12.8 3.8 M6 6.6 V12.4 M9 6.6 V12.4" stroke="#ee3b48" stroke-width="1.3" stroke-linecap="round" stroke-linejoin="round"/></svg><div style="position:absolute;left:319.3px;top:186.3px;width:1583.4px;height:43.2px;background:#eff0f3;border-top-right-radius:3px;"></div><div style="position:absolute;left:319.3px;top:186.3px;width:1583.4px;height:1px;background:#d8dbe1;"></div><div style="position:absolute;left:1902px;top:186.3px;width:1px;height:43.2px;background:#d8dbe1;"></div><div style="position:absolute;left:319.3px;top:186.3px;width:98.5px;height:43.2px;box-sizing:border-box;background:#fff;border:1px solid #3db08c;border-bottom:none;"></div><div style="position:absolute;left:319.3px;top:229.2px;width:1583.5px;height:225.8px;box-sizing:border-box;background:#e9f5f3;border:1px solid #3db08c;border-bottom-width:1.5px;"></div><div style="position:absolute;left:320.3px;top:273.9px;width:1581.5px;height:1px;background:#d2d8db;"></div><div style="position:absolute;left:320.3px;top:318.9px;width:1581.5px;height:1px;background:#d2d8db;"></div><div style="position:absolute;left:320.3px;top:363.9px;width:1581.5px;height:1px;background:#d2d8db;"></div><div style="position:absolute;left:320.3px;top:408.9px;width:1581.5px;height:1px;background:#d2d8db;"></div><svg style="position:absolute;left:386.5px;top:203.4px;" width="10" height="10" viewBox="0 0 10 10" fill="none"><path d="M0.8 0.8 L8.8 8.8 M8.8 0.8 L0.8 8.8" stroke="#4b5263" stroke-width="1.3" stroke-linecap="round"/></svg><svg style="position:absolute;left:334.7px;top:243.2px;" width="18" height="18" viewBox="0 0 18 18" fill="none"><circle cx="8.8" cy="8.8" r="8.8" fill="#35ab88"/><path d="M5 9.2 L7.7 11.6 L12.6 6.4" stroke="#fff" stroke-width="1.5" stroke-linecap="round" stroke-linejoin="round"/></svg><svg style="position:absolute;left:369.6px;top:243px;" width="19" height="19" viewBox="0 0 19 19" fill="none"><circle cx="9.4" cy="9" r="8.5" stroke="#4b5263" stroke-width="1.1"/><path d="M6.6 6.2 L12.2 11.8 M12.2 6.2 L6.6 11.8" stroke="#4b5263" stroke-width="1.1" stroke-linecap="round"/></svg><svg style="position:absolute;left:334.7px;top:288.2px;" width="18" height="18" viewBox="0 0 18 18" fill="none"><circle cx="8.8" cy="8.8" r="8.8" fill="#35ab88"/><path d="M5 9.2 L7.7 11.6 L12.6 6.4" stroke="#fff" stroke-width="1.5" stroke-linecap="round" stroke-linejoin="round"/></svg><svg style="position:absolute;left:369.6px;top:288px;" width="19" height="19" viewBox="0 0 19 19" fill="none"><circle cx="9.4" cy="9" r="8.5" stroke="#4b5263" stroke-width="1.1"/><path d="M6.6 6.2 L12.2 11.8 M12.2 6.2 L6.6 11.8" stroke="#4b5263" stroke-width="1.1" stroke-linecap="round"/></svg><svg style="position:absolute;left:334.7px;top:333.2px;" width="18" height="18" viewBox="0 0 18 18" fill="none"><circle cx="8.8" cy="8.8" r="8.8" fill="#35ab88"/><path d="M5 9.2 L7.7 11.6 L12.6 6.4" stroke="#fff" stroke-width="1.5" stroke-linecap="round" stroke-linejoin="round"/></svg><svg style="position:absolute;left:369.6px;top:333px;" width="19" height="19" viewBox="0 0 19 19" fill="none"><circle cx="9.4" cy="9" r="8.5" stroke="#4b5263" stroke-width="1.1"/><path d="M6.6 6.2 L12.2 11.8 M12.2 6.2 L6.6 11.8" stroke="#4b5263" stroke-width="1.1" stroke-linecap="round"/></svg><svg style="position:absolute;left:334.7px;top:378.2px;" width="18" height="18" viewBox="0 0 18 18" fill="none"><circle cx="8.8" cy="8.8" r="8.8" fill="#35ab88"/><path d="M5 9.2 L7.7 11.6 L12.6 6.4" stroke="#fff" stroke-width="1.5" stroke-linecap="round" stroke-linejoin="round"/></svg><svg style="position:absolute;left:369.6px;top:378px;" width="19" height="19" viewBox="0 0 19 19" fill="none"><circle cx="9.4" cy="9" r="8.5" stroke="#4b5263" stroke-width="1.1"/><path d="M6.6 6.2 L12.2 11.8 M12.2 6.2 L6.6 11.8" stroke="#4b5263" stroke-width="1.1" stroke-linecap="round"/></svg><svg style="position:absolute;left:334.7px;top:423.2px;" width="18" height="18" viewBox="0 0 18 18" fill="none"><circle cx="8.8" cy="8.8" r="8.8" fill="#35ab88"/><path d="M5 9.2 L7.7 11.6 L12.6 6.4" stroke="#fff" stroke-width="1.5" stroke-linecap="round" stroke-linejoin="round"/></svg><svg style="position:absolute;left:369.6px;top:423px;" width="19" height="19" viewBox="0 0 19 19" fill="none"><circle cx="9.4" cy="9" r="8.5" stroke="#4b5263" stroke-width="1.1"/><path d="M6.6 6.2 L12.2 11.8 M12.2 6.2 L6.6 11.8" stroke="#4b5263" stroke-width="1.1" stroke-linecap="round"/></svg><div style="position:absolute;left:319.3px;top:455px;width:1px;height:90.5px;background:#d8dbe1;"></div><div style="position:absolute;left:1902px;top:455px;width:1px;height:90.5px;background:#d8dbe1;"></div><div style="position:absolute;left:319.3px;top:500.8px;width:1583.7px;height:44.8px;box-sizing:border-box;background:#eff0f3;border:1px solid #d8dbe1;border-top:2px solid #d3d7de;"></div><div style="position:absolute;left:1495.3px;top:563.2px;width:219.5px;height:35.4px;box-sizing:border-box;background:#fff;border:1px solid #d6d9e0;border-radius:5px;"></div><svg style="position:absolute;left:1691.5px;top:579.2px;" width="11" height="7" viewBox="0 0 11 7" fill="none"><path d="M0.8 0.8 L5 5 L9.2 0.8" stroke="#5a5f6b" stroke-width="1.1" stroke-linecap="round" stroke-linejoin="round"/></svg><svg style="position:absolute;left:1740px;top:574px;" width="12" height="15" viewBox="0 0 12 15" fill="none"><path d="M0.6 0.4 V14.4 M10.6 0.6 L4 7.4 L10.6 14.2" stroke="#c3c6ce" stroke-width="1.3" stroke-linecap="round" stroke-linejoin="round"/></svg><svg style="position:absolute;left:1769px;top:574px;" width="9" height="15" viewBox="0 0 9 15" fill="none"><path d="M7.8 0.6 L1 7.4 L7.8 14.2" stroke="#c3c6ce" stroke-width="1.3" stroke-linecap="round" stroke-linejoin="round"/></svg><svg style="position:absolute;left:1863px;top:574px;" width="9" height="15" viewBox="0 0 9 15" fill="none"><path d="M0.8 0.6 L7.6 7.4 L0.8 14.2" stroke="#c3c6ce" stroke-width="1.3" stroke-linecap="round" stroke-linejoin="round"/></svg><svg style="position:absolute;left:1889.5px;top:574px;" width="12" height="15" viewBox="0 0 12 15" fill="none"><path d="M10.4 0.4 V14.4 M0.6 0.6 L7.2 7.4 L0.6 14.2" stroke="#c3c6ce" stroke-width="1.3" stroke-linecap="round" stroke-linejoin="round"/></svg><div style="position:absolute;left:1903px;top:644.2px;width:19px;height:34.7px;background:#0b3bd6;border-radius:5px 0 0 5px;"></div><svg style="position:absolute;left:1909.5px;top:657px;" width="7" height="11" viewBox="0 0 7 11" fill="none"><path d="M5.6 0.8 L1 5.2 L5.6 9.6" stroke="#fff" stroke-width="1.3" stroke-linecap="round" stroke-linejoin="round"/></svg><div style="position:absolute;left:319px;top:607.1px;width:154px;height:35.6px;background:#e6e9fc;border-radius:5px;"></div><svg style="position:absolute;left:330.5px;top:617.5px;" width="15" height="15" viewBox="0 0 15 15" fill="none"><path d="M7.2 0.6 V13.8 M0.6 7.2 H13.8" stroke="#4a5fe6" stroke-width="1.4" stroke-linecap="round" stroke-linejoin="round"/></svg><div style="position:absolute;left:482px;top:607.1px;width:127.7px;height:35.6px;background:#e6e9fc;border-radius:5px;"></div><svg style="position:absolute;left:493.5px;top:617.5px;" width="15" height="15" viewBox="0 0 15 15" fill="none"><path d="M7.2 0.6 V13.8 M0.6 7.2 H13.8" stroke="#4a5fe6" stroke-width="1.4" stroke-linecap="round" stroke-linejoin="round"/></svg><div style="position:absolute;left:619px;top:607.1px;width:189.9px;height:35.6px;background:#e6e9fc;border-radius:5px;"></div><svg style="position:absolute;left:628.4px;top:617px;" width="16" height="16" viewBox="0 0 16 16" fill="none"><rect x="0.7" y="4.2" width="13.6" height="3.6" rx="0.8" stroke="#4a5fe6" stroke-width="1.4" stroke-linecap="round" stroke-linejoin="round"/><path d="M1.8 7.8 V14.4 H13.2 V7.8 M7.5 4.2 V14.4 M7.5 4.2 Q4.4 4.4 3.6 2.6 Q3.2 0.8 4.8 0.8 Q6.8 1 7.5 4.2 Q8.2 1 10.2 0.8 Q11.8 0.8 11.4 2.6 Q10.6 4.4 7.5 4.2" stroke="#4a5fe6" stroke-width="1.4" stroke-linecap="round" stroke-linejoin="round"/></svg><div style="position:absolute;left:818px;top:607.1px;width:195.8px;height:35.6px;background:#e6e9fc;border-radius:5px;"></div><svg style="position:absolute;left:828.5px;top:616.5px;" width="17" height="17" viewBox="0 0 17 17" fill="none"><path d="M9.6 0.8 H14.8 Q16 0.8 16 2 V7.2 L7.4 15.8 Q6.6 16.6 5.8 15.8 L1 11 Q0.2 10.2 1 9.4 Z" stroke="#4a5fe6" stroke-width="1.4" stroke-linecap="round" stroke-linejoin="round"/><circle cx="12.4" cy="4.4" r="1" stroke="#4a5fe6" stroke-width="1.4" stroke-linecap="round" stroke-linejoin="round"/><path d="M5.6 8.4 V12.4 M3.6 10.4 H7.6" stroke="#4a5fe6" stroke-width="1.1" stroke-linecap="round"/></svg><div style="position:absolute;left:1022.9px;top:607.1px;width:115px;height:35.6px;background:#e6e9fc;border-radius:5px;"></div><svg style="position:absolute;left:1033px;top:617.5px;" width="18" height="15" viewBox="0 0 18 15" fill="none"><path d="M1 3 L5 7.6 L8.6 1 L12.2 7.6 L16.2 3 L14.6 13.2 H2.6 Z" stroke="#4a5fe6" stroke-width="1.4" stroke-linecap="round" stroke-linejoin="round"/></svg><div style="position:absolute;left:1147.2px;top:612.2px;width:50.1px;height:25.8px;box-sizing:border-box;background:#fff;border:1px solid #d6d9e0;border-radius:13px;"></div><svg style="position:absolute;left:1154px;top:616.3px;" width="18" height="18" viewBox="0 0 18 18" fill="none"><circle cx="8.9" cy="8.9" r="8.9" fill="#fccb2c"/><circle cx="8.9" cy="8.9" r="7.3" fill="#eaa809"/><path d="M6.3 10.8 L5.9 7.6 L7.6 8.9 L8.9 6.7 L10.2 8.9 L11.9 7.6 L11.5 10.8 Z" fill="#f8cf4a"/></svg><div style="position:absolute;left:318px;top:228px;width:93.8px;height:48.8px;box-sizing:border-box;border:4px solid #f00a0a;"></div><div style="position:absolute;left:0px;top:0px;width:1922px;height:955px;box-sizing:border-box;border:1px solid #a0a0a0;"></div>
<div class="t" style="left:111.00px;top:17.27px;font-size:19.755px;font-weight:700;color:#111425;letter-spacing:0.286px;">CRM</div><div class="t" style="left:205.97px;top:20.76px;font-size:14.457px;font-weight:400;color:#2c3038;letter-spacing:0.243px;">Bàn làm việc</div><div class="t" style="left:337.00px;top:20.68px;font-size:14.547px;font-weight:400;color:#2c3038;letter-spacing:0.329px;">Tiềm năng</div><div class="t" style="left:451.70px;top:20.78px;font-size:14.436px;font-weight:400;color:#2c3038;letter-spacing:0.272px;">Chào hàng</div><div class="t" style="left:567.57px;top:20.75px;font-size:14.466px;font-weight:400;color:#2c3038;letter-spacing:0.259px;">Liên hệ</div><div class="t" style="left:660.76px;top:20.65px;font-size:14.588px;font-weight:400;color:#2c3038;letter-spacing:0.355px;">Khách hàng</div><div class="t" style="left:785.90px;top:21.04px;font-size:14.125px;font-weight:400;color:#2c3038;letter-spacing:0.075px;">Cơ hội</div><div class="t" style="left:872.28px;top:20.89px;font-size:14.297px;font-weight:400;color:#2c3038;letter-spacing:0.169px;">Báo giá</div><div class="t" style="left:967.80px;top:20.87px;font-size:14.324px;font-weight:400;color:#4a62ea;letter-spacing:0.208px;">Đơn hàng</div><div class="t" style="left:1076.47px;top:20.78px;font-size:14.428px;font-weight:400;color:#2c3038;letter-spacing:0.276px;">Hóa đơn</div><div class="t" style="left:1178.20px;top:20.86px;font-size:14.341px;font-weight:400;color:#2c3038;letter-spacing:0.186px;">Ao cơ hội</div><div class="t" style="left:1284.75px;top:20.59px;font-size:14.662px;font-weight:400;color:#2c3038;letter-spacing:0.389px;">Hoạt động</div><div class="t" style="left:1404.90px;top:20.30px;font-size:14.051px;font-weight:400;color:#2c3038;letter-spacing:0.028px;">Tất cả</div><div class="t" style="left:1869.60px;top:19.21px;font-size:17.0px;font-weight:700;color:#ffffff;letter-spacing:0.023px;">HT</div><div class="t" style="left:19.50px;top:72.35px;font-size:22.5px;font-weight:400;color:#1d2027;letter-spacing:0.202px;-webkit-text-stroke:0.22px #1d2027;">Thêm Đơn hàng</div><div class="t" style="left:203.50px;top:77.79px;font-size:18.2px;font-weight:400;color:#1d2027;letter-spacing:0.442px;-webkit-text-stroke:0.22px #1d2027;">Mẫu tiêu chuẩn</div><div class="t" style="left:1485.00px;top:76.72px;font-size:14.5px;font-weight:400;color:#4a62ea;letter-spacing:0.259px;">Giao diện đầy đủ</div><div class="t" style="left:1633.75px;top:76.61px;font-size:14.633px;font-weight:400;color:#1d2027;letter-spacing:0.412px;-webkit-text-stroke:0.22px #1d2027;">Hủy bỏ</div><div class="t" style="left:1728.36px;top:76.67px;font-size:14.564px;font-weight:400;color:#4a62ea;letter-spacing:0.323px;">Lưu và thêm</div><div class="t" style="left:1859.20px;top:77.15px;font-size:14.0px;font-weight:700;color:#ffffff;letter-spacing:-0.645px;">Lưu</div><div class="t" style="left:44.55px;top:140.05px;font-size:14.7px;font-weight:400;color:#1d2027;letter-spacing:0.808px;-webkit-text-stroke:0.22px #1d2027;">DH0007437</div><div class="t" style="left:28.35px;top:186.55px;font-size:14.7px;font-weight:400;color:#1d2027;letter-spacing:1.062px;">14/10/2025</div><div class="t" style="left:174.07px;top:186.88px;font-size:14.436px;font-weight:400;color:#1d2027;letter-spacing:0.271px;">Bản nháp</div><div class="t" style="left:37.30px;top:240.11px;font-size:14.515px;font-weight:400;color:#1d2027;letter-spacing:0.297px;">Công ty TNHH Thành Công</div><div class="t" style="left:20.10px;top:290.90px;font-size:14.641px;font-weight:400;color:#1d2027;letter-spacing:0.327px;-webkit-text-stroke:0.22px #1d2027;">Thông tin giao hàng</div><div class="t" style="left:225.50px;top:291.16px;font-size:14.452px;font-weight:400;color:#4a62ea;letter-spacing:0.255px;">Thay đổi</div><div class="t" style="left:62.96px;top:332.47px;font-size:14.559px;font-weight:400;color:#1d2027;letter-spacing:0.347px;-webkit-text-stroke:0.22px #1d2027;">Nguyễn Văn Nam</div><div class="t" style="left:64.00px;top:357.95px;font-size:14.7px;font-weight:400;color:#1d2027;letter-spacing:1.047px;-webkit-text-stroke:0.22px #1d2027;">0903516487</div><div class="t" style="left:62.97px;top:384.40px;font-size:14.41px;font-weight:400;color:#1d2027;letter-spacing:0.218px;">Khu Ngoại giao đoàn, Phường</div><div class="t" style="left:64.00px;top:406.35px;font-size:14.234px;font-weight:400;color:#1d2027;letter-spacing:0.124px;">Xuân Tảo, Quận Bắc Từ Liêm,</div><div class="t" style="left:64.00px;top:428.16px;font-size:14.454px;font-weight:400;color:#1d2027;letter-spacing:0.238px;">Thành phố Hà Nội, Việt Nam</div><div class="t" style="left:18.26px;top:473.68px;font-size:14.556px;font-weight:400;color:#1d2027;letter-spacing:0.311px;-webkit-text-stroke:0.22px #1d2027;">Liên hệ</div><div class="t" style="left:36.87px;top:507.07px;font-size:14.441px;font-weight:400;color:#1d2027;letter-spacing:0.272px;">Nguyễn Văn Nam</div><div class="t" style="left:18.28px;top:554.98px;font-size:14.312px;font-weight:400;color:#1d2027;letter-spacing:0.177px;-webkit-text-stroke:0.22px #1d2027;">Báo giá</div><div class="t" style="left:39.50px;top:588.75px;font-size:14.7px;font-weight:400;color:#9aa0ad;letter-spacing:0.502px;">- Không chọn -</div><div class="t" style="left:19.30px;top:636.02px;font-size:14.382px;font-weight:400;color:#1d2027;letter-spacing:0.226px;-webkit-text-stroke:0.22px #1d2027;">Đơn hàng cha</div><div class="t" style="left:39.50px;top:669.85px;font-size:14.7px;font-weight:400;color:#9aa0ad;letter-spacing:0.502px;">- Không chọn -</div><div class="t" style="left:19.30px;top:717.81px;font-size:14.632px;font-weight:400;color:#1d2027;letter-spacing:0.343px;-webkit-text-stroke:0.22px #1d2027;">Chiến dịch</div><div class="t" style="left:39.50px;top:751.85px;font-size:14.7px;font-weight:400;color:#9aa0ad;letter-spacing:0.502px;">- Không chọn -</div><div class="t" style="left:19.30px;top:799.01px;font-size:14.273px;font-weight:400;color:#1d2027;letter-spacing:0.166px;-webkit-text-stroke:0.22px #1d2027;">Cơ hội</div><div class="t" style="left:39.50px;top:832.75px;font-size:14.7px;font-weight:400;color:#9aa0ad;letter-spacing:0.502px;">- Không chọn -</div><div class="t" style="left:19.30px;top:879.62px;font-size:14.618px;font-weight:400;color:#1d2027;letter-spacing:0.277px;-webkit-text-stroke:0.22px #1d2027;">Giá trị thanh lý</div><div class="t" style="left:255.40px;top:915.15px;font-size:14.0px;font-weight:400;color:#1d2027;letter-spacing:0.000px;">0</div><div class="t" style="left:353.70px;top:143.69px;font-size:14.421px;font-weight:400;color:#9aa0ad;letter-spacing:0.236px;">Thêm hàng hoá vào đơn</div><div class="t" style="left:578.80px;top:143.45px;font-size:14.7px;font-weight:400;color:#9aa0ad;letter-spacing:0.617px;">(F4)</div><div class="t" style="left:671.20px;top:143.80px;font-size:14.532px;font-weight:400;color:#1d2027;letter-spacing:0.294px;-webkit-text-stroke:0.22px #1d2027;">Chọn nhiều hàng hoá</div><div class="t" style="left:894.70px;top:143.83px;font-size:14.489px;font-weight:400;color:#1d2027;letter-spacing:0.245px;">Tự động tăng SL khi chọn trùng</div><div class="t" style="left:1826.40px;top:143.84px;font-size:14.484px;font-weight:400;color:#ee3b48;letter-spacing:0.251px;">Xóa tất cả</div><div class="t" style="left:337.80px;top:201.45px;font-size:14.0px;font-weight:700;color:#4b5263;letter-spacing:-0.431px;">Gợi ý</div><div class="t" style="left:432.70px;top:201.92px;font-size:14.029px;font-weight:700;color:#1d2027;letter-spacing:0.028px;">STT</div><div class="t" style="left:499.80px;top:201.68px;font-size:14.309px;font-weight:700;color:#1d2027;letter-spacing:0.193px;">Mã hàng hóa</div><div class="t" style="left:719.30px;top:201.66px;font-size:14.342px;font-weight:700;color:#1d2027;letter-spacing:0.180px;">Diễn giải</div><div class="t" style="left:1049.50px;top:201.76px;font-size:14.218px;font-weight:700;color:#1d2027;letter-spacing:0.211px;">Kho</div><div class="t" style="left:1306.20px;top:201.77px;font-size:14.209px;font-weight:700;color:#1d2027;letter-spacing:0.136px;">Tồn kho</div><div class="t" style="left:1379.50px;top:201.80px;font-size:14.174px;font-weight:700;color:#1d2027;letter-spacing:0.092px;">Đơn vị tính</div><div class="t" style="left:1537.00px;top:201.95px;font-size:14.0px;font-weight:700;color:#1d2027;letter-spacing:-0.187px;">Số lượng</div><div class="t" style="left:1709.60px;top:201.95px;font-size:14.0px;font-weight:700;color:#1d2027;letter-spacing:0.000px;">Đ</div><div class="t" style="left:1828.80px;top:201.77px;font-size:14.208px;font-weight:700;color:#1d2027;letter-spacing:0.117px;">Tổng tiền</div><div class="t" style="left:499.80px;top:244.98px;font-size:14.193px;font-weight:400;color:#1d2027;letter-spacing:0.148px;">OCAMDIEN</div><div class="t" style="left:719.30px;top:244.70px;font-size:14.527px;font-weight:400;color:#1d2027;letter-spacing:0.288px;">Ổ cắm điện đa năng</div><div class="t" style="left:499.58px;top:289.94px;font-size:14.241px;font-weight:400;color:#1d2027;letter-spacing:0.191px;">MAYLOCNUOC</div><div class="t" style="left:719.08px;top:289.96px;font-size:14.218px;font-weight:400;color:#1d2027;letter-spacing:0.124px;">Máy lọc nước RO</div><div class="t" style="left:499.80px;top:334.84px;font-size:14.367px;font-weight:400;color:#1d2027;letter-spacing:0.271px;">CHUOTMAYTINH</div><div class="t" style="left:719.30px;top:334.72px;font-size:14.507px;font-weight:400;color:#1d2027;letter-spacing:0.272px;">Chuột máy tính</div><div class="t" style="left:499.80px;top:380.15px;font-size:14.0px;font-weight:400;color:#1d2027;letter-spacing:-0.277px;">GHEXOAY</div><div class="t" style="left:719.30px;top:379.84px;font-size:14.366px;font-weight:400;color:#1d2027;letter-spacing:0.230px;">Ghế xoay</div><div class="t" style="left:499.59px;top:425.06px;font-size:14.106px;font-weight:400;color:#1d2027;letter-spacing:0.084px;">MAYDONGGAY</div><div class="t" style="left:719.07px;top:424.76px;font-size:14.452px;font-weight:400;color:#1d2027;letter-spacing:0.251px;">Máy đóng gáy xoắn nhựa</div><div class="t" style="left:441.68px;top:469.99px;font-size:14.297px;font-weight:400;color:#1d2027;letter-spacing:0.000px;">1</div><div class="t" style="left:1579.58px;top:470.29px;font-size:14.297px;font-weight:400;color:#1d2027;letter-spacing:0.000px;">1</div><div class="t" style="left:1884.70px;top:470.40px;font-size:14.174px;font-weight:400;color:#1d2027;letter-spacing:0.000px;">0</div><div class="t" style="left:499.80px;top:519.18px;font-size:14.672px;font-weight:400;color:#1d2027;letter-spacing:0.411px;-webkit-text-stroke:0.22px #1d2027;">Tổng cộng</div><div class="t" style="left:1579.58px;top:519.49px;font-size:14.297px;font-weight:400;color:#1d2027;letter-spacing:0.000px;-webkit-text-stroke:0.22px #1d2027;">1</div><div class="t" style="left:1884.70px;top:519.60px;font-size:14.174px;font-weight:400;color:#1d2027;letter-spacing:0.000px;-webkit-text-stroke:0.22px #1d2027;">0</div><div class="t" style="left:319.40px;top:574.23px;font-size:14.261px;font-weight:400;color:#1d2027;letter-spacing:0.145px;">Tổng số:</div><div class="t" style="left:381.80px;top:574.45px;font-size:14.0px;font-weight:700;color:#1d2027;letter-spacing:0.000px;">1</div><div class="t" style="left:1513.35px;top:572.95px;font-size:14.7px;font-weight:400;color:#262930;letter-spacing:0.397px;">100 bản ghi trên trang</div><div class="t" style="left:1795.40px;top:574.05px;font-size:14.0px;font-weight:700;color:#1d2027;letter-spacing:0.000px;">1</div><div class="t" style="left:1807.90px;top:573.55px;font-size:14.586px;font-weight:400;color:#1d2027;letter-spacing:0.492px;">đến</div><div class="t" style="left:1837.60px;top:574.05px;font-size:14.0px;font-weight:700;color:#1d2027;letter-spacing:0.000px;">1</div><div class="t" style="left:350.90px;top:617.92px;font-size:14.504px;font-weight:400;color:#4a5fe6;letter-spacing:0.298px;-webkit-text-stroke:0.22px #4a5fe6;">Chọn hàng hóa</div><div class="t" style="left:514.20px;top:617.79px;font-size:14.661px;font-weight:400;color:#4a5fe6;letter-spacing:0.433px;-webkit-text-stroke:0.22px #4a5fe6;">Thêm dòng</div><div class="t" style="left:650.60px;top:617.77px;font-size:14.679px;font-weight:400;color:#4a5fe6;letter-spacing:0.381px;-webkit-text-stroke:0.22px #4a5fe6;">Áp dụng khuyến mại</div><div class="t" style="left:854.30px;top:617.87px;font-size:14.564px;font-weight:400;color:#4a5fe6;letter-spacing:0.302px;-webkit-text-stroke:0.22px #4a5fe6;">Chiết khấu đơn hàng</div><div class="t" style="left:1058.70px;top:617.75px;font-size:14.7px;font-weight:400;color:#4a5fe6;letter-spacing:0.442px;-webkit-text-stroke:0.22px #4a5fe6;">Đổi điểm</div><div class="t" style="left:1178.80px;top:618.20px;font-size:14.174px;font-weight:400;color:#1d2027;letter-spacing:0.000px;">0</div>
</body></html>
